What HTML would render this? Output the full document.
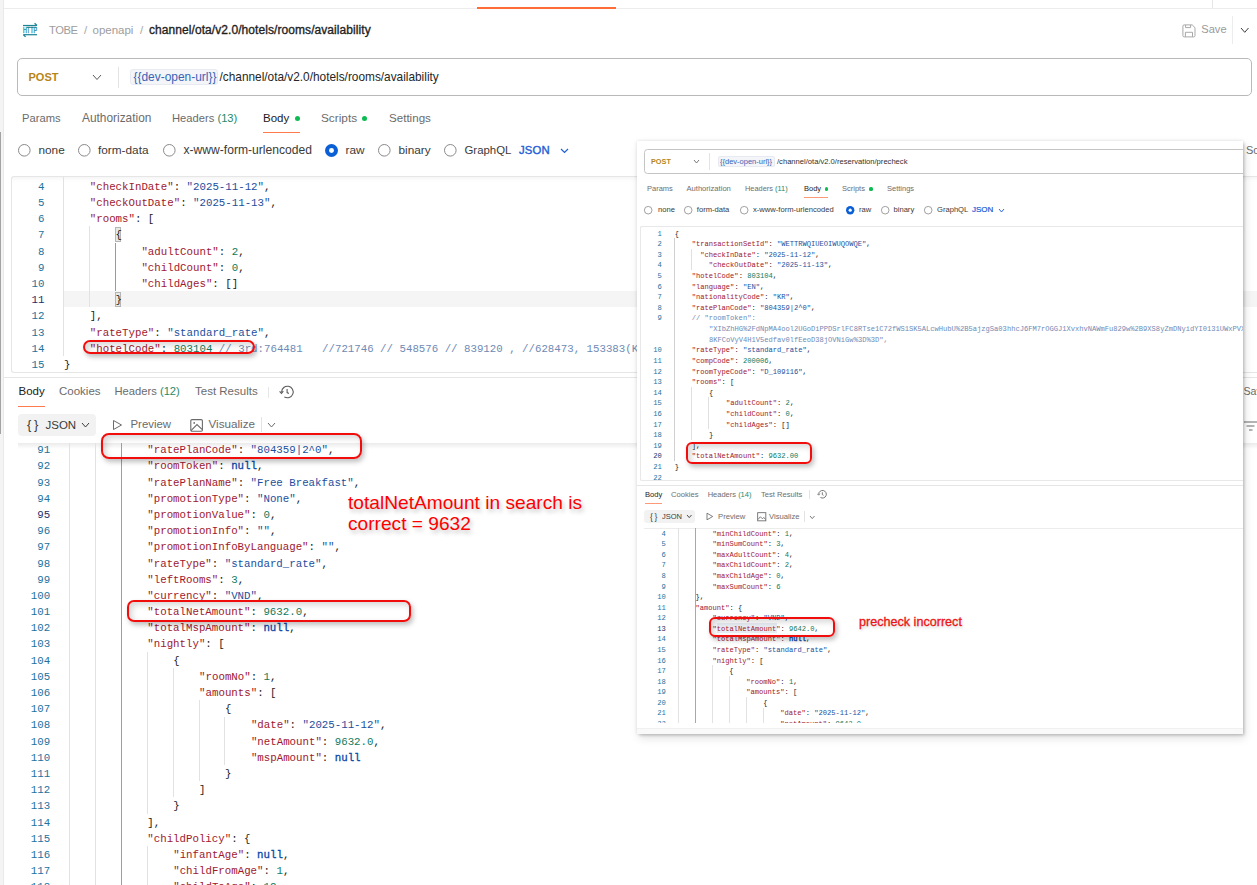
<!DOCTYPE html>
<html><head><meta charset="utf-8">
<style>
html,body{margin:0;padding:0;}
body{width:1257px;height:885px;overflow:hidden;position:relative;background:#fff;font-family:"Liberation Sans",sans-serif;}
.abs{position:absolute;}
.tx{position:absolute;white-space:nowrap;font-family:"Liberation Sans",sans-serif;}
.ln{position:absolute;text-align:right;font-family:"Liberation Mono",monospace;white-space:nowrap;}
.cl{position:absolute;white-space:pre;font-family:"Liberation Mono",monospace;color:#212121;}
</style></head><body>
<div class="abs" style="left:0;top:0;width:3px;height:885px;background:#f4f4f4"></div>
<div class="abs" style="left:3.00px;top:0.00px;width:1px;height:885.00px;background:#e9e9e9"></div>
<div class="abs" style="left:0.00px;top:132.00px;width:1px;height:302.00px;background:#a3a3a3"></div>
<div class="abs" style="left:4.00px;top:8.00px;width:1253.00px;height:1px;background:#ececec"></div>
<div class="abs" style="left:1212.00px;top:0.00px;width:1px;height:8.00px;background:#e6e6e6"></div>
<div class="abs" style="left:477px;top:7px;width:139px;height:2px;background:#ff6c37"></div>
<svg class="abs" style="left:20px;top:20px" width="20" height="20" viewBox="0 0 20 20">
<path d="M3 5.5 H17" stroke="#1b8396" stroke-width="1.2" fill="none"/>
<path d="M14.6 3.2 L17 5.5" stroke="#1b8396" stroke-width="1.2" fill="none"/>
<path d="M3.4 14.7 H17" stroke="#1b8396" stroke-width="1.2" fill="none"/>
<path d="M3.4 14.7 L5.6 16.8" stroke="#1b8396" stroke-width="1.2" fill="none"/>
<text x="3" y="13.2" font-family="Liberation Sans" font-size="8.6" font-weight="normal" fill="#1b8396" stroke="#1b8396" stroke-width="0.35" textLength="14" lengthAdjust="spacingAndGlyphs">HTTP</text>
</svg>
<div class="tx" style="left:49.00px;top:20.00px;line-height:20px;font-size:11.2px;color:#9d9d9d;font-weight:400;font-family:'Liberation Sans',sans-serif;letter-spacing:-0.4px">TOBE</div>
<div class="tx" style="left:84.00px;top:20.00px;line-height:20px;font-size:11.5px;color:#a5a5a5;font-weight:400;font-family:'Liberation Sans',sans-serif;">/</div>
<div class="tx" style="left:92.50px;top:20.00px;line-height:20px;font-size:11.5px;color:#9d9d9d;font-weight:400;font-family:'Liberation Sans',sans-serif;">openapi</div>
<div class="tx" style="left:140.00px;top:20.00px;line-height:20px;font-size:11.5px;color:#a5a5a5;font-weight:400;font-family:'Liberation Sans',sans-serif;">/</div>
<div class="tx" style="left:149.00px;top:20.00px;line-height:20px;font-size:12px;color:#1f1f1f;font-weight:400;font-family:'Liberation Sans',sans-serif;letter-spacing:0.07px;-webkit-text-stroke:0.35px #1f1f1f">channel/ota/v2.0/hotels/rooms/availability</div>
<svg class="abs" style="left:1181.5px;top:23.5px" width="14" height="14" viewBox="0 0 14 14">
<path d="M2.2 0.9 H10.2 L13 3.7 V11.6 Q13 12.9 11.7 12.9 H2.2 Q0.9 12.9 0.9 11.6 V2.2 Q0.9 0.9 2.2 0.9 Z" fill="none" stroke="#a3a3a3" stroke-width="0.95"/>
<path d="M3.6 1 V3.6 H8.6 V1" fill="none" stroke="#a3a3a3" stroke-width="0.95"/>
<path d="M3.4 12.8 V8.3 H10.5 V12.8" fill="none" stroke="#a3a3a3" stroke-width="0.95"/>
</svg>
<div class="tx" style="left:1201.30px;top:19.40px;line-height:20px;font-size:11.1px;color:#9a9a9a;font-weight:400;font-family:'Liberation Sans',sans-serif;">Save</div>
<div class="abs" style="left:1232.00px;top:16.00px;width:1px;height:28.00px;background:#ececec"></div>
<svg class="abs" style="left:1239.50px;top:27.20px" width="9.50" height="6.30"><polyline points="1,1 4.75,5.30 8.50,1" fill="none" stroke="#3c3c3c" stroke-width="1.0"/></svg>
<div class="abs" style="left:17px;top:58px;width:1235px;height:38px;box-sizing:border-box;border:1px solid #b9b9b9;border-radius:5px"></div>
<div class="tx" style="left:28.50px;top:66.50px;line-height:20px;font-size:11px;color:#b7861a;font-weight:700;font-family:'Liberation Sans',sans-serif;">POST</div>
<svg class="abs" style="left:92.00px;top:74.00px" width="10.00" height="6.50"><polyline points="1,1 5.00,5.50 9.00,1" fill="none" stroke="#5a5a5a" stroke-width="1.0"/></svg>
<div class="abs" style="left:117.50px;top:67.00px;width:1px;height:21.00px;background:#e3e3e3"></div>
<div class="abs" style="left:130px;top:69px;width:88px;height:16px;box-sizing:border-box;background:#f3f5f9;border:1px solid #e7eaf0;border-radius:3px"></div>
<div class="tx" style="left:133.50px;top:66.50px;line-height:20px;font-size:11.95px;color:#3a64b5;font-weight:400;font-family:'Liberation Sans',sans-serif;">{{dev-open-url}}</div>
<div class="tx" style="left:219.50px;top:66.50px;line-height:20px;font-size:11.85px;color:#262626;font-weight:400;font-family:'Liberation Sans',sans-serif;">/channel/ota/v2.0/hotels/rooms/availability</div>
<div class="tx" style="left:22.00px;top:108.00px;line-height:20px;font-size:11.2px;color:#6b6b6b;font-weight:400;font-family:'Liberation Sans',sans-serif;">Params</div>
<div class="tx" style="left:82.00px;top:108.00px;line-height:20px;font-size:11.9px;color:#6b6b6b;font-weight:400;font-family:'Liberation Sans',sans-serif;">Authorization</div>
<div class="tx" style="left:172.00px;top:108.00px;line-height:20px;font-size:11.2px;color:#6b6b6b;font-weight:400;font-family:'Liberation Sans',sans-serif;">Headers <span style="color:#1f8a6a">(13)</span></div>
<div class="tx" style="left:263.00px;top:108.00px;line-height:20px;font-size:11.5px;color:#212121;font-weight:400;font-family:'Liberation Sans',sans-serif;">Body</div>
<div class="abs" style="left:294.50px;top:116.00px;width:5.00px;height:5.00px;border-radius:50%;background:#0cbb52"></div>
<div class="tx" style="left:321.00px;top:108.00px;line-height:20px;font-size:11.8px;color:#6b6b6b;font-weight:400;font-family:'Liberation Sans',sans-serif;">Scripts</div>
<div class="abs" style="left:362.00px;top:116.00px;width:5.00px;height:5.00px;border-radius:50%;background:#0cbb52"></div>
<div class="tx" style="left:389.00px;top:108.00px;line-height:20px;font-size:11.6px;color:#6b6b6b;font-weight:400;font-family:'Liberation Sans',sans-serif;">Settings</div>
<div class="abs" style="left:263px;top:131.5px;width:37px;height:1.5px;background:#ff7a4d"></div>
<svg class="abs" style="left:16.90px;top:143.40px" width="14.60" height="14.60"><circle cx="7.30" cy="7.30" r="5.80" fill="#fff" stroke="#8a8a8a" stroke-width="1"/></svg>
<div class="tx" style="left:38.50px;top:140.20px;line-height:20px;font-size:11.8px;color:#3a3a3a;font-weight:400;font-family:'Liberation Sans',sans-serif;">none</div>
<svg class="abs" style="left:76.90px;top:143.40px" width="14.60" height="14.60"><circle cx="7.30" cy="7.30" r="5.80" fill="#fff" stroke="#8a8a8a" stroke-width="1"/></svg>
<div class="tx" style="left:98.00px;top:140.20px;line-height:20px;font-size:11.8px;color:#3a3a3a;font-weight:400;font-family:'Liberation Sans',sans-serif;">form-data</div>
<svg class="abs" style="left:161.90px;top:143.40px" width="14.60" height="14.60"><circle cx="7.30" cy="7.30" r="5.80" fill="#fff" stroke="#8a8a8a" stroke-width="1"/></svg>
<div class="tx" style="left:183.50px;top:140.20px;line-height:20px;font-size:12.1px;color:#3a3a3a;font-weight:400;font-family:'Liberation Sans',sans-serif;">x-www-form-urlencoded</div>
<svg class="abs" style="left:323.50px;top:143.20px" width="15.00" height="15.00"><circle cx="7.50" cy="7.50" r="6.50" fill="#0b5fd6"/><circle cx="7.50" cy="7.50" r="2.47" fill="#fff"/></svg>
<div class="tx" style="left:345.50px;top:140.20px;line-height:20px;font-size:11.8px;color:#3a3a3a;font-weight:400;font-family:'Liberation Sans',sans-serif;">raw</div>
<svg class="abs" style="left:376.90px;top:143.40px" width="14.60" height="14.60"><circle cx="7.30" cy="7.30" r="5.80" fill="#fff" stroke="#8a8a8a" stroke-width="1"/></svg>
<div class="tx" style="left:398.50px;top:140.20px;line-height:20px;font-size:11.8px;color:#3a3a3a;font-weight:400;font-family:'Liberation Sans',sans-serif;">binary</div>
<svg class="abs" style="left:442.90px;top:143.40px" width="14.60" height="14.60"><circle cx="7.30" cy="7.30" r="5.80" fill="#fff" stroke="#8a8a8a" stroke-width="1"/></svg>
<div class="tx" style="left:464.50px;top:140.20px;line-height:20px;font-size:11.4px;color:#3a3a3a;font-weight:400;font-family:'Liberation Sans',sans-serif;">GraphQL</div>
<div class="tx" style="left:519.00px;top:140.20px;line-height:20px;font-size:11.3px;color:#1f5fd6;font-weight:400;font-family:'Liberation Sans',sans-serif;-webkit-text-stroke:0.4px #1f5fd6;letter-spacing:0.2px">JSON</div>
<svg class="abs" style="left:559.50px;top:148.00px" width="9.00" height="5.50"><polyline points="1,1 4.50,4.50 8.00,1" fill="none" stroke="#1f5fd6" stroke-width="1.2"/></svg>
<div class="tx" style="left:1246.00px;top:140.00px;line-height:20px;font-size:11px;color:#6b6b6b;font-weight:400;font-family:'Liberation Sans',sans-serif;">Sc</div>
<div class="abs" style="left:11px;top:176px;width:1300px;height:197px;box-sizing:border-box;border:1px solid #e6e6e6;border-right:none;border-radius:3px 0 0 3px;box-shadow:inset 0 5px 5px -4px rgba(0,0,0,0.06)"></div>
<div class="abs" style="left:64px;top:291.20px;width:1200px;height:16.20px;background:#f5f5f5"></div>
<div class="abs" style="left:63.00px;top:177.00px;width:1px;height:179.00px;background:#e2e2e2"></div>
<div class="abs" style="left:89.00px;top:226.40px;width:1px;height:81.00px;background:#e2e2e2"></div>
<div class="abs" style="left:115.00px;top:243.10px;width:1px;height:48.10px;background:#9a9a9a"></div>
<div class="abs" style="left:115px;top:227.00px;width:6px;height:15px;background:#e4ebe4;border:1px solid #b5b5b5;box-sizing:border-box"></div>
<div class="abs" style="left:115px;top:291.80px;width:6px;height:15px;background:#e4ebe4;border:1px solid #b5b5b5;box-sizing:border-box"></div>
<div class="ln" style="left:4.50px;top:178.70px;width:40px;height:16.20px;line-height:16.20px;font-size:10.75px;color:#2172a0">4</div>
<div class="cl" style="left:89.80px;top:178.70px;height:16.20px;line-height:16.20px;font-size:10.75px"><span style="color:#a0182e">&quot;checkInDate&quot;</span>: <span style="color:#1b4f9e">&quot;2025-11-12&quot;</span>,</div>
<div class="ln" style="left:4.50px;top:194.90px;width:40px;height:16.20px;line-height:16.20px;font-size:10.75px;color:#2172a0">5</div>
<div class="cl" style="left:89.80px;top:194.90px;height:16.20px;line-height:16.20px;font-size:10.75px"><span style="color:#a0182e">&quot;checkOutDate&quot;</span>: <span style="color:#1b4f9e">&quot;2025-11-13&quot;</span>,</div>
<div class="ln" style="left:4.50px;top:211.10px;width:40px;height:16.20px;line-height:16.20px;font-size:10.75px;color:#2172a0">6</div>
<div class="cl" style="left:89.80px;top:211.10px;height:16.20px;line-height:16.20px;font-size:10.75px"><span style="color:#a0182e">&quot;rooms&quot;</span>: [</div>
<div class="ln" style="left:4.50px;top:227.30px;width:40px;height:16.20px;line-height:16.20px;font-size:10.75px;color:#2172a0">7</div>
<div class="cl" style="left:115.60px;top:227.30px;height:16.20px;line-height:16.20px;font-size:10.75px">{</div>
<div class="ln" style="left:4.50px;top:243.50px;width:40px;height:16.20px;line-height:16.20px;font-size:10.75px;color:#2172a0">8</div>
<div class="cl" style="left:141.40px;top:243.50px;height:16.20px;line-height:16.20px;font-size:10.75px"><span style="color:#a0182e">&quot;adultCount&quot;</span>: <span style="color:#127a5c">2</span>,</div>
<div class="ln" style="left:4.50px;top:259.70px;width:40px;height:16.20px;line-height:16.20px;font-size:10.75px;color:#2172a0">9</div>
<div class="cl" style="left:141.40px;top:259.70px;height:16.20px;line-height:16.20px;font-size:10.75px"><span style="color:#a0182e">&quot;childCount&quot;</span>: <span style="color:#127a5c">0</span>,</div>
<div class="ln" style="left:4.50px;top:275.90px;width:40px;height:16.20px;line-height:16.20px;font-size:10.75px;color:#2172a0">10</div>
<div class="cl" style="left:141.40px;top:275.90px;height:16.20px;line-height:16.20px;font-size:10.75px"><span style="color:#a0182e">&quot;childAges&quot;</span>: []</div>
<div class="ln" style="left:4.50px;top:292.10px;width:40px;height:16.20px;line-height:16.20px;font-size:10.75px;color:#1d2f6b">11</div>
<div class="cl" style="left:115.60px;top:292.10px;height:16.20px;line-height:16.20px;font-size:10.75px">}</div>
<div class="ln" style="left:4.50px;top:308.30px;width:40px;height:16.20px;line-height:16.20px;font-size:10.75px;color:#2172a0">12</div>
<div class="cl" style="left:89.80px;top:308.30px;height:16.20px;line-height:16.20px;font-size:10.75px">],</div>
<div class="ln" style="left:4.50px;top:324.50px;width:40px;height:16.20px;line-height:16.20px;font-size:10.75px;color:#2172a0">13</div>
<div class="cl" style="left:89.80px;top:324.50px;height:16.20px;line-height:16.20px;font-size:10.75px"><span style="color:#a0182e">&quot;rateType&quot;</span>: <span style="color:#1b4f9e">&quot;standard_rate&quot;</span>,</div>
<div class="ln" style="left:4.50px;top:340.70px;width:40px;height:16.20px;line-height:16.20px;font-size:10.75px;color:#2172a0">14</div>
<div class="cl" style="left:89.80px;top:340.70px;height:16.20px;line-height:16.20px;font-size:10.75px"><span style="color:#a0182e">&quot;hotelCode&quot;</span>: <span style="color:#127a5c">803104</span> <span style="color:#6f8ab5">// 3rd:764481   //721746 // 548576 // 839120 , //628473, 153383(K</span></div>
<div class="ln" style="left:4.50px;top:356.90px;width:40px;height:16.20px;line-height:16.20px;font-size:10.75px;color:#2172a0">15</div>
<div class="cl" style="left:64.00px;top:356.90px;height:16.20px;line-height:16.20px;font-size:10.75px">}</div>
<div class="abs" style="left:4.00px;top:377.00px;width:1253.00px;height:1px;background:#e6e6e6"></div>
<div class="tx" style="left:18.50px;top:381.00px;line-height:20px;font-size:11.5px;color:#212121;font-weight:400;font-family:'Liberation Sans',sans-serif;">Body</div>
<div class="tx" style="left:59.00px;top:381.00px;line-height:20px;font-size:11.5px;color:#6b6b6b;font-weight:400;font-family:'Liberation Sans',sans-serif;">Cookies</div>
<div class="tx" style="left:114.50px;top:381.00px;line-height:20px;font-size:11.2px;color:#6b6b6b;font-weight:400;font-family:'Liberation Sans',sans-serif;">Headers <span style="color:#1f8a6a">(12)</span></div>
<div class="tx" style="left:195.00px;top:381.00px;line-height:20px;font-size:11.5px;color:#6b6b6b;font-weight:400;font-family:'Liberation Sans',sans-serif;">Test Results</div>
<div class="abs" style="left:268.00px;top:387.00px;width:1px;height:11.00px;background:#e6e6e6"></div>
<svg class="abs" style="left:279px;top:384px" width="16" height="16" viewBox="0 0 16 16">
<path d="M2.6 7.9 A5.8 5.8 0 1 1 5.3 12.9" fill="none" stroke="#5a5a5a" stroke-width="1.1"/>
<path d="M0.6 7.3 L2.5 9.4 L4.3 7.2" fill="none" stroke="#5a5a5a" stroke-width="1.1"/>
<path d="M8.1 5 V8.6 L9.9 9.6" fill="none" stroke="#5a5a5a" stroke-width="1.1"/>
</svg>
<div class="abs" style="left:18px;top:405.5px;width:27px;height:1.5px;background:#ff7a4d"></div>
<div class="tx" style="left:1243.50px;top:381.00px;line-height:20px;font-size:10.6px;color:#6b6b6b;font-weight:400;font-family:'Liberation Sans',sans-serif;">Sav</div>
<div class="abs" style="left:18px;top:414px;width:78px;height:21.8px;background:#f2f2f2;border-radius:4px"></div>
<div class="tx" style="left:27.00px;top:414.50px;line-height:20px;font-size:13px;color:#3a3a3a;font-weight:400;font-family:'Liberation Sans',sans-serif;">{&thinsp;}</div>
<div class="tx" style="left:45.50px;top:414.50px;line-height:20px;font-size:11.5px;color:#3a3a3a;font-weight:400;font-family:'Liberation Sans',sans-serif;">JSON</div>
<svg class="abs" style="left:80.50px;top:421.50px" width="9.00" height="6.00"><polyline points="1,1 4.50,5.00 8.00,1" fill="none" stroke="#3a3a3a" stroke-width="1.0"/></svg>
<svg class="abs" style="left:112px;top:419px" width="11" height="12" viewBox="0 0 11 12">
<path d="M1.5 1.5 L9.5 6 L1.5 10.5 Z" fill="none" stroke="#6b6b6b" stroke-width="1.0"/></svg>
<div class="tx" style="left:130.50px;top:413.60px;line-height:20px;font-size:11.4px;color:#6b6b6b;font-weight:400;font-family:'Liberation Sans',sans-serif;">Preview</div>
<svg class="abs" style="left:189px;top:418px" width="15" height="15" viewBox="0 0 15 15">
<rect x="1.8" y="1.6" width="11.6" height="11.6" rx="1.2" fill="none" stroke="#6b6b6b" stroke-width="1.1"/>
<path d="M2 12.6 L8 6.6 L13 11.4" fill="none" stroke="#6b6b6b" stroke-width="1.1"/>
<circle cx="5.2" cy="4.9" r="0.9" fill="#6b6b6b"/></svg>
<div class="tx" style="left:208.50px;top:413.60px;line-height:20px;font-size:11.7px;color:#6b6b6b;font-weight:400;font-family:'Liberation Sans',sans-serif;">Visualize</div>
<div class="abs" style="left:261.00px;top:417.00px;width:1px;height:15.00px;background:#e3e3e3"></div>
<svg class="abs" style="left:267.00px;top:422.00px" width="9.00" height="6.00"><polyline points="1,1 4.50,5.00 8.00,1" fill="none" stroke="#6b6b6b" stroke-width="1.0"/></svg>
<svg class="abs" style="left:1244px;top:421px" width="13" height="11" viewBox="0 0 13 11">
<path d="M0 1 H13 M2.5 5 H10.5 M5 9 H8.5" stroke="#6b6b6b" stroke-width="1.1"/></svg>
<div class="abs" style="left:18px;top:443px;width:1300px;height:6px;background:linear-gradient(#ebebeb,rgba(255,255,255,0))"></div>
<div class="abs" style="left:69.00px;top:443.00px;width:1px;height:442.00px;background:#e2e2e2"></div>
<div class="abs" style="left:94.90px;top:443.00px;width:1px;height:442.00px;background:#e2e2e2"></div>
<div class="abs" style="left:120.80px;top:443.00px;width:1px;height:442.00px;background:#9e9e9e"></div>
<div class="abs" style="left:146.70px;top:651.77px;width:1px;height:161.90px;background:#e2e2e2"></div>
<div class="abs" style="left:172.60px;top:667.96px;width:1px;height:129.52px;background:#e2e2e2"></div>
<div class="abs" style="left:198.50px;top:700.35px;width:1px;height:80.95px;background:#e2e2e2"></div>
<div class="abs" style="left:224.40px;top:716.53px;width:1px;height:48.57px;background:#e2e2e2"></div>
<div class="abs" style="left:146.70px;top:846.06px;width:1px;height:38.94px;background:#e2e2e2"></div>
<div class="ln" style="left:10.20px;top:442.20px;width:40px;height:16.19px;line-height:16.19px;font-size:10.75px;color:#2172a0">91</div>
<div class="cl" style="left:147.30px;top:442.20px;height:16.19px;line-height:16.19px;font-size:10.75px"><span style="color:#a0182e">&quot;ratePlanCode&quot;</span>: <span style="color:#1b4f9e">&quot;804359|2^0&quot;</span>,</div>
<div class="ln" style="left:10.20px;top:458.39px;width:40px;height:16.19px;line-height:16.19px;font-size:10.75px;color:#2172a0">92</div>
<div class="cl" style="left:147.30px;top:458.39px;height:16.19px;line-height:16.19px;font-size:10.75px"><span style="color:#a0182e">&quot;roomToken&quot;</span>: <span style="color:#0b47a8;-webkit-text-stroke:0.3px #0b47a8">null</span>,</div>
<div class="ln" style="left:10.20px;top:474.58px;width:40px;height:16.19px;line-height:16.19px;font-size:10.75px;color:#2172a0">93</div>
<div class="cl" style="left:147.30px;top:474.58px;height:16.19px;line-height:16.19px;font-size:10.75px"><span style="color:#a0182e">&quot;ratePlanName&quot;</span>: <span style="color:#1b4f9e">&quot;Free Breakfast&quot;</span>,</div>
<div class="ln" style="left:10.20px;top:490.77px;width:40px;height:16.19px;line-height:16.19px;font-size:10.75px;color:#2172a0">94</div>
<div class="cl" style="left:147.30px;top:490.77px;height:16.19px;line-height:16.19px;font-size:10.75px"><span style="color:#a0182e">&quot;promotionType&quot;</span>: <span style="color:#1b4f9e">&quot;None&quot;</span>,</div>
<div class="ln" style="left:10.20px;top:506.96px;width:40px;height:16.19px;line-height:16.19px;font-size:10.75px;color:#1d2f6b">95</div>
<div class="cl" style="left:147.30px;top:506.96px;height:16.19px;line-height:16.19px;font-size:10.75px"><span style="color:#a0182e">&quot;promotionValue&quot;</span>: <span style="color:#127a5c">0</span>,</div>
<div class="ln" style="left:10.20px;top:523.15px;width:40px;height:16.19px;line-height:16.19px;font-size:10.75px;color:#2172a0">96</div>
<div class="cl" style="left:147.30px;top:523.15px;height:16.19px;line-height:16.19px;font-size:10.75px"><span style="color:#a0182e">&quot;promotionInfo&quot;</span>: <span style="color:#1b4f9e">&quot;&quot;</span>,</div>
<div class="ln" style="left:10.20px;top:539.34px;width:40px;height:16.19px;line-height:16.19px;font-size:10.75px;color:#2172a0">97</div>
<div class="cl" style="left:147.30px;top:539.34px;height:16.19px;line-height:16.19px;font-size:10.75px"><span style="color:#a0182e">&quot;promotionInfoByLanguage&quot;</span>: <span style="color:#1b4f9e">&quot;&quot;</span>,</div>
<div class="ln" style="left:10.20px;top:555.53px;width:40px;height:16.19px;line-height:16.19px;font-size:10.75px;color:#2172a0">98</div>
<div class="cl" style="left:147.30px;top:555.53px;height:16.19px;line-height:16.19px;font-size:10.75px"><span style="color:#a0182e">&quot;rateType&quot;</span>: <span style="color:#1b4f9e">&quot;standard_rate&quot;</span>,</div>
<div class="ln" style="left:10.20px;top:571.72px;width:40px;height:16.19px;line-height:16.19px;font-size:10.75px;color:#2172a0">99</div>
<div class="cl" style="left:147.30px;top:571.72px;height:16.19px;line-height:16.19px;font-size:10.75px"><span style="color:#a0182e">&quot;leftRooms&quot;</span>: <span style="color:#127a5c">3</span>,</div>
<div class="ln" style="left:10.20px;top:587.91px;width:40px;height:16.19px;line-height:16.19px;font-size:10.75px;color:#2172a0">100</div>
<div class="cl" style="left:147.30px;top:587.91px;height:16.19px;line-height:16.19px;font-size:10.75px"><span style="color:#a0182e">&quot;currency&quot;</span>: <span style="color:#1b4f9e">&quot;VND&quot;</span>,</div>
<div class="ln" style="left:10.20px;top:604.10px;width:40px;height:16.19px;line-height:16.19px;font-size:10.75px;color:#2172a0">101</div>
<div class="cl" style="left:147.30px;top:604.10px;height:16.19px;line-height:16.19px;font-size:10.75px"><span style="color:#a0182e">&quot;totalNetAmount&quot;</span>: <span style="color:#127a5c">9632.0</span>,</div>
<div class="ln" style="left:10.20px;top:620.29px;width:40px;height:16.19px;line-height:16.19px;font-size:10.75px;color:#2172a0">102</div>
<div class="cl" style="left:147.30px;top:620.29px;height:16.19px;line-height:16.19px;font-size:10.75px"><span style="color:#a0182e">&quot;totalMspAmount&quot;</span>: <span style="color:#0b47a8;-webkit-text-stroke:0.3px #0b47a8">null</span>,</div>
<div class="ln" style="left:10.20px;top:636.49px;width:40px;height:16.19px;line-height:16.19px;font-size:10.75px;color:#2172a0">103</div>
<div class="cl" style="left:147.30px;top:636.49px;height:16.19px;line-height:16.19px;font-size:10.75px"><span style="color:#a0182e">&quot;nightly&quot;</span>: [</div>
<div class="ln" style="left:10.20px;top:652.67px;width:40px;height:16.19px;line-height:16.19px;font-size:10.75px;color:#2172a0">104</div>
<div class="cl" style="left:173.20px;top:652.67px;height:16.19px;line-height:16.19px;font-size:10.75px">{</div>
<div class="ln" style="left:10.20px;top:668.86px;width:40px;height:16.19px;line-height:16.19px;font-size:10.75px;color:#2172a0">105</div>
<div class="cl" style="left:199.10px;top:668.86px;height:16.19px;line-height:16.19px;font-size:10.75px"><span style="color:#a0182e">&quot;roomNo&quot;</span>: <span style="color:#127a5c">1</span>,</div>
<div class="ln" style="left:10.20px;top:685.05px;width:40px;height:16.19px;line-height:16.19px;font-size:10.75px;color:#2172a0">106</div>
<div class="cl" style="left:199.10px;top:685.05px;height:16.19px;line-height:16.19px;font-size:10.75px"><span style="color:#a0182e">&quot;amounts&quot;</span>: [</div>
<div class="ln" style="left:10.20px;top:701.25px;width:40px;height:16.19px;line-height:16.19px;font-size:10.75px;color:#2172a0">107</div>
<div class="cl" style="left:225.00px;top:701.25px;height:16.19px;line-height:16.19px;font-size:10.75px">{</div>
<div class="ln" style="left:10.20px;top:717.43px;width:40px;height:16.19px;line-height:16.19px;font-size:10.75px;color:#2172a0">108</div>
<div class="cl" style="left:250.90px;top:717.43px;height:16.19px;line-height:16.19px;font-size:10.75px"><span style="color:#a0182e">&quot;date&quot;</span>: <span style="color:#1b4f9e">&quot;2025-11-12&quot;</span>,</div>
<div class="ln" style="left:10.20px;top:733.62px;width:40px;height:16.19px;line-height:16.19px;font-size:10.75px;color:#2172a0">109</div>
<div class="cl" style="left:250.90px;top:733.62px;height:16.19px;line-height:16.19px;font-size:10.75px"><span style="color:#a0182e">&quot;netAmount&quot;</span>: <span style="color:#127a5c">9632.0</span>,</div>
<div class="ln" style="left:10.20px;top:749.81px;width:40px;height:16.19px;line-height:16.19px;font-size:10.75px;color:#2172a0">110</div>
<div class="cl" style="left:250.90px;top:749.81px;height:16.19px;line-height:16.19px;font-size:10.75px"><span style="color:#a0182e">&quot;mspAmount&quot;</span>: <span style="color:#0b47a8;-webkit-text-stroke:0.3px #0b47a8">null</span></div>
<div class="ln" style="left:10.20px;top:766.00px;width:40px;height:16.19px;line-height:16.19px;font-size:10.75px;color:#2172a0">111</div>
<div class="cl" style="left:225.00px;top:766.00px;height:16.19px;line-height:16.19px;font-size:10.75px">}</div>
<div class="ln" style="left:10.20px;top:782.19px;width:40px;height:16.19px;line-height:16.19px;font-size:10.75px;color:#2172a0">112</div>
<div class="cl" style="left:199.10px;top:782.19px;height:16.19px;line-height:16.19px;font-size:10.75px">]</div>
<div class="ln" style="left:10.20px;top:798.38px;width:40px;height:16.19px;line-height:16.19px;font-size:10.75px;color:#2172a0">113</div>
<div class="cl" style="left:173.20px;top:798.38px;height:16.19px;line-height:16.19px;font-size:10.75px">}</div>
<div class="ln" style="left:10.20px;top:814.57px;width:40px;height:16.19px;line-height:16.19px;font-size:10.75px;color:#2172a0">114</div>
<div class="cl" style="left:147.30px;top:814.57px;height:16.19px;line-height:16.19px;font-size:10.75px">],</div>
<div class="ln" style="left:10.20px;top:830.76px;width:40px;height:16.19px;line-height:16.19px;font-size:10.75px;color:#2172a0">115</div>
<div class="cl" style="left:147.30px;top:830.76px;height:16.19px;line-height:16.19px;font-size:10.75px"><span style="color:#a0182e">&quot;childPolicy&quot;</span>: {</div>
<div class="ln" style="left:10.20px;top:846.96px;width:40px;height:16.19px;line-height:16.19px;font-size:10.75px;color:#2172a0">116</div>
<div class="cl" style="left:173.20px;top:846.96px;height:16.19px;line-height:16.19px;font-size:10.75px"><span style="color:#a0182e">&quot;infantAge&quot;</span>: <span style="color:#0b47a8;-webkit-text-stroke:0.3px #0b47a8">null</span>,</div>
<div class="ln" style="left:10.20px;top:863.14px;width:40px;height:16.19px;line-height:16.19px;font-size:10.75px;color:#2172a0">117</div>
<div class="cl" style="left:173.20px;top:863.14px;height:16.19px;line-height:16.19px;font-size:10.75px"><span style="color:#a0182e">&quot;childFromAge&quot;</span>: <span style="color:#127a5c">1</span>,</div>
<div class="ln" style="left:10.20px;top:879.33px;width:40px;height:16.19px;line-height:16.19px;font-size:10.75px;color:#2172a0">118</div>
<div class="cl" style="left:173.20px;top:879.33px;height:16.19px;line-height:16.19px;font-size:10.75px"><span style="color:#a0182e">&quot;childToAge&quot;</span>: <span style="color:#127a5c">12</span>,</div>
<div class="abs" style="left:82.80px;top:339.80px;width:172.50px;height:14.00px;box-sizing:border-box;border:2.3px solid #f20d0d;border-radius:7px;box-shadow:2px 3px 5px rgba(0,0,0,0.25), inset 3px 3px 6px rgba(0,0,0,0.16)"></div>
<div class="abs" style="left:101.00px;top:433.30px;width:260.50px;height:25.30px;box-sizing:border-box;border:2.2px solid #f20d0d;border-radius:8px;box-shadow:2px 3px 5px rgba(0,0,0,0.25), inset 3px 3px 6px rgba(0,0,0,0.16)"></div>
<div class="abs" style="left:127.00px;top:600.00px;width:284.00px;height:22.00px;box-sizing:border-box;border:2px solid #f20d0d;border-radius:7px;box-shadow:2px 3px 5px rgba(0,0,0,0.25), inset 3px 3px 6px rgba(0,0,0,0.16)"></div>
<div class="tx" style="left:348px;top:493px;font-size:19.15px;line-height:20.8px;color:#ff0000;text-shadow:2px 3px 4px rgba(0,0,0,0.25)">totalNetAmount in search is<br>correct = 9632</div>
<div class="abs" style="left:637px;top:141px;width:606px;height:593px;background:#fff;box-shadow:0 0 3px 0 rgba(0,0,0,0.12), 1.5px 1.5px 3px rgba(0,0,0,0.16), 2px 4px 9px rgba(0,0,0,0.12);overflow:hidden">
<div class="abs" style="left:6.80px;top:8.20px;width:700px;height:25px;box-sizing:border-box;border:1px solid #c4c4c4;border-radius:3.5px"></div>
<div class="tx" style="left:14.00px;top:10.50px;line-height:20px;font-size:7.3px;color:#b7861a;font-weight:700;font-family:'Liberation Sans',sans-serif;">POST</div>
<svg class="abs" style="left:55.50px;top:18.00px" width="7.00" height="5.00"><polyline points="1,1 3.50,4.00 6.00,1" fill="none" stroke="#6a6a6a" stroke-width="0.9"/></svg>
<div class="abs" style="left:72.30px;top:12.00px;width:1px;height:16.50px;background:#e3e3e3"></div>
<div class="abs" style="left:81.00px;top:15.00px;width:57px;height:11px;box-sizing:border-box;background:#f3f5f9;border:1px solid #e7eaf0;border-radius:2px"></div>
<div class="tx" style="left:83.00px;top:10.50px;line-height:20px;font-size:7.5px;color:#3a64b5;font-weight:400;font-family:'Liberation Sans',sans-serif;">{{dev-open-url}}</div>
<div class="tx" style="left:140.00px;top:10.50px;line-height:20px;font-size:7.6px;color:#303030;font-weight:400;font-family:'Liberation Sans',sans-serif;">/channel/ota/v2.0/reservation/precheck</div>
<div class="tx" style="left:10.00px;top:37.70px;line-height:20px;font-size:7.5px;color:#6e6e6e;font-weight:400;font-family:'Liberation Sans',sans-serif;">Params</div>
<div class="tx" style="left:49.50px;top:37.70px;line-height:20px;font-size:7.6px;color:#6e6e6e;font-weight:400;font-family:'Liberation Sans',sans-serif;">Authorization</div>
<div class="tx" style="left:108.00px;top:37.70px;line-height:20px;font-size:7.4px;color:#6e6e6e;font-weight:400;font-family:'Liberation Sans',sans-serif;">Headers <span style="color:#1f8a6a">(11)</span></div>
<div class="tx" style="left:167.00px;top:37.70px;line-height:20px;font-size:7.5px;color:#252525;font-weight:400;font-family:'Liberation Sans',sans-serif;">Body</div>
<div class="abs" style="left:188.00px;top:46.40px;width:3.20px;height:3.20px;border-radius:50%;background:#0cbb52"></div>
<div class="tx" style="left:205.00px;top:37.70px;line-height:20px;font-size:7.5px;color:#6e6e6e;font-weight:400;font-family:'Liberation Sans',sans-serif;">Scripts</div>
<div class="abs" style="left:232.40px;top:46.40px;width:3.20px;height:3.20px;border-radius:50%;background:#0cbb52"></div>
<div class="tx" style="left:250.00px;top:37.70px;line-height:20px;font-size:7.5px;color:#6e6e6e;font-weight:400;font-family:'Liberation Sans',sans-serif;">Settings</div>
<div class="abs" style="left:167.00px;top:56.30px;width:24px;height:1.2px;background:#ff9a78"></div>
<svg class="abs" style="left:6.30px;top:63.80px" width="10.40" height="10.40"><circle cx="5.20" cy="5.20" r="3.80" fill="#fff" stroke="#8a8a8a" stroke-width="0.8"/></svg>
<div class="tx" style="left:21.00px;top:59.00px;line-height:20px;font-size:7.6px;color:#3a3a3a;font-weight:400;font-family:'Liberation Sans',sans-serif;">none</div>
<svg class="abs" style="left:45.50px;top:63.80px" width="10.40" height="10.40"><circle cx="5.20" cy="5.20" r="3.80" fill="#fff" stroke="#8a8a8a" stroke-width="0.8"/></svg>
<div class="tx" style="left:59.80px;top:59.00px;line-height:20px;font-size:7.6px;color:#3a3a3a;font-weight:400;font-family:'Liberation Sans',sans-serif;">form-data</div>
<svg class="abs" style="left:101.60px;top:63.80px" width="10.40" height="10.40"><circle cx="5.20" cy="5.20" r="3.80" fill="#fff" stroke="#8a8a8a" stroke-width="0.8"/></svg>
<div class="tx" style="left:116.00px;top:59.00px;line-height:20px;font-size:7.6px;color:#3a3a3a;font-weight:400;font-family:'Liberation Sans',sans-serif;">x-www-form-urlencoded</div>
<svg class="abs" style="left:207.80px;top:63.80px" width="10.40" height="10.40"><circle cx="5.20" cy="5.20" r="4.20" fill="#0b5fd6"/><circle cx="5.20" cy="5.20" r="1.60" fill="#fff"/></svg>
<div class="tx" style="left:222.00px;top:59.00px;line-height:20px;font-size:7.6px;color:#3a3a3a;font-weight:400;font-family:'Liberation Sans',sans-serif;">raw</div>
<svg class="abs" style="left:243.00px;top:63.80px" width="10.40" height="10.40"><circle cx="5.20" cy="5.20" r="3.80" fill="#fff" stroke="#8a8a8a" stroke-width="0.8"/></svg>
<div class="tx" style="left:256.50px;top:59.00px;line-height:20px;font-size:7.6px;color:#3a3a3a;font-weight:400;font-family:'Liberation Sans',sans-serif;">binary</div>
<svg class="abs" style="left:286.00px;top:63.80px" width="10.40" height="10.40"><circle cx="5.20" cy="5.20" r="3.80" fill="#fff" stroke="#8a8a8a" stroke-width="0.8"/></svg>
<div class="tx" style="left:300.00px;top:59.00px;line-height:20px;font-size:7.6px;color:#3a3a3a;font-weight:400;font-family:'Liberation Sans',sans-serif;">GraphQL</div>
<div class="tx" style="left:335.00px;top:59.00px;line-height:20px;font-size:8px;color:#1559d6;font-weight:400;font-family:'Liberation Sans',sans-serif;-webkit-text-stroke:0.2px #1559d6">JSON</div>
<svg class="abs" style="left:361.00px;top:66.50px" width="7.00" height="5.00"><polyline points="1,1 3.50,4.00 6.00,1" fill="none" stroke="#1559d6" stroke-width="0.9"/></svg>
<div class="abs" style="left:3.20px;top:85.30px;width:700px;height:254.50px;box-sizing:border-box;border:1px solid #e8e8e8;border-right:none;border-radius:2px"></div>
<div class="abs" style="left:37.10px;top:97.31px;width:1px;height:222.81px;background:#cfcfcf"></div>
<div class="abs" style="left:54.20px;top:107.91px;width:1px;height:21.22px;background:#e0e0e0"></div>
<div class="abs" style="left:54.20px;top:245.84px;width:1px;height:53.05px;background:#e0e0e0"></div>
<div class="abs" style="left:71.30px;top:256.45px;width:1px;height:31.83px;background:#e0e0e0"></div>
<div class="ln" style="left:-15.30px;top:87.59px;width:40px;height:10.61px;line-height:10.61px;font-size:7.13px;color:#2172a0">1</div>
<div class="cl" style="left:37.70px;top:87.59px;height:10.61px;line-height:10.61px;font-size:7.1px">{</div>
<div class="ln" style="left:-15.30px;top:98.21px;width:40px;height:10.61px;line-height:10.61px;font-size:7.13px;color:#2172a0">2</div>
<div class="cl" style="left:54.80px;top:98.21px;height:10.61px;line-height:10.61px;font-size:7.1px"><span style="color:#a0182e">&quot;transactionSetId&quot;</span>: <span style="color:#1b4f9e">&quot;WETTRWQIUEOIWUQOWQE&quot;</span>,</div>
<div class="ln" style="left:-15.30px;top:108.81px;width:40px;height:10.61px;line-height:10.61px;font-size:7.13px;color:#2172a0">3</div>
<div class="cl" style="left:63.32px;top:108.81px;height:10.61px;line-height:10.61px;font-size:7.1px"><span style="color:#a0182e">&quot;checkInDate&quot;</span>: <span style="color:#1b4f9e">&quot;2025-11-12&quot;</span>,</div>
<div class="ln" style="left:-15.30px;top:119.43px;width:40px;height:10.61px;line-height:10.61px;font-size:7.13px;color:#2172a0">4</div>
<div class="cl" style="left:71.84px;top:119.43px;height:10.61px;line-height:10.61px;font-size:7.1px"><span style="color:#a0182e">&quot;checkOutDate&quot;</span>: <span style="color:#1b4f9e">&quot;2025-11-13&quot;</span>,</div>
<div class="ln" style="left:-15.30px;top:130.03px;width:40px;height:10.61px;line-height:10.61px;font-size:7.13px;color:#2172a0">5</div>
<div class="cl" style="left:54.80px;top:130.03px;height:10.61px;line-height:10.61px;font-size:7.1px"><span style="color:#a0182e">&quot;hotelCode&quot;</span>: <span style="color:#127a5c">803104</span>,</div>
<div class="ln" style="left:-15.30px;top:140.65px;width:40px;height:10.61px;line-height:10.61px;font-size:7.13px;color:#2172a0">6</div>
<div class="cl" style="left:54.80px;top:140.65px;height:10.61px;line-height:10.61px;font-size:7.1px"><span style="color:#a0182e">&quot;language&quot;</span>: <span style="color:#1b4f9e">&quot;EN&quot;</span>,</div>
<div class="ln" style="left:-15.30px;top:151.25px;width:40px;height:10.61px;line-height:10.61px;font-size:7.13px;color:#2172a0">7</div>
<div class="cl" style="left:54.80px;top:151.25px;height:10.61px;line-height:10.61px;font-size:7.1px"><span style="color:#a0182e">&quot;nationalityCode&quot;</span>: <span style="color:#1b4f9e">&quot;KR&quot;</span>,</div>
<div class="ln" style="left:-15.30px;top:161.86px;width:40px;height:10.61px;line-height:10.61px;font-size:7.13px;color:#2172a0">8</div>
<div class="cl" style="left:54.80px;top:161.86px;height:10.61px;line-height:10.61px;font-size:7.1px"><span style="color:#a0182e">&quot;ratePlanCode&quot;</span>: <span style="color:#1b4f9e">&quot;804359|2^0&quot;</span>,</div>
<div class="ln" style="left:-15.30px;top:172.47px;width:40px;height:10.61px;line-height:10.61px;font-size:7.13px;color:#2172a0">9</div>
<div class="cl" style="left:54.80px;top:172.47px;height:10.61px;line-height:10.61px;font-size:7.1px"><span style="color:#6f8ab5">// &quot;roomToken&quot;:</span></div>
<div class="cl" style="left:71.90px;top:183.09px;height:10.61px;line-height:10.61px;font-size:7.1px"><span style="color:#6f8ab5">&quot;XIbZhHG%2FdNpMA4ool2UGoDiPPDSrlFC8RTse1C72fWS1SK5ALcwHubU%2B5ajzgSa03hhcJ6FM7rOGGJ1XvxhvNAWmFu829w%2B9XS8yZmDNyidYI0131UWxPVX</span></div>
<div class="cl" style="left:71.90px;top:193.69px;height:10.61px;line-height:10.61px;font-size:7.1px"><span style="color:#6f8ab5">8KFCoVyV4H1V5edfav0lfEeoD38jOVNiGw%3D%3D&quot;,</span></div>
<div class="ln" style="left:-15.30px;top:204.30px;width:40px;height:10.61px;line-height:10.61px;font-size:7.13px;color:#2172a0">10</div>
<div class="cl" style="left:54.80px;top:204.30px;height:10.61px;line-height:10.61px;font-size:7.1px"><span style="color:#a0182e">&quot;rateType&quot;</span>: <span style="color:#1b4f9e">&quot;standard_rate&quot;</span>,</div>
<div class="ln" style="left:-15.30px;top:214.91px;width:40px;height:10.61px;line-height:10.61px;font-size:7.13px;color:#2172a0">11</div>
<div class="cl" style="left:54.80px;top:214.91px;height:10.61px;line-height:10.61px;font-size:7.1px"><span style="color:#a0182e">&quot;compCode&quot;</span>: <span style="color:#127a5c">200006</span>,</div>
<div class="ln" style="left:-15.30px;top:225.53px;width:40px;height:10.61px;line-height:10.61px;font-size:7.13px;color:#2172a0">12</div>
<div class="cl" style="left:54.80px;top:225.53px;height:10.61px;line-height:10.61px;font-size:7.1px"><span style="color:#a0182e">&quot;roomTypeCode&quot;</span>: <span style="color:#1b4f9e">&quot;D_109116&quot;</span>,</div>
<div class="ln" style="left:-15.30px;top:236.13px;width:40px;height:10.61px;line-height:10.61px;font-size:7.13px;color:#2172a0">13</div>
<div class="cl" style="left:54.80px;top:236.13px;height:10.61px;line-height:10.61px;font-size:7.1px"><span style="color:#a0182e">&quot;rooms&quot;</span>: [</div>
<div class="ln" style="left:-15.30px;top:246.74px;width:40px;height:10.61px;line-height:10.61px;font-size:7.13px;color:#2172a0">14</div>
<div class="cl" style="left:71.90px;top:246.74px;height:10.61px;line-height:10.61px;font-size:7.1px">{</div>
<div class="ln" style="left:-15.30px;top:257.35px;width:40px;height:10.61px;line-height:10.61px;font-size:7.13px;color:#2172a0">15</div>
<div class="cl" style="left:89.00px;top:257.35px;height:10.61px;line-height:10.61px;font-size:7.1px"><span style="color:#a0182e">&quot;adultCount&quot;</span>: <span style="color:#127a5c">2</span>,</div>
<div class="ln" style="left:-15.30px;top:267.96px;width:40px;height:10.61px;line-height:10.61px;font-size:7.13px;color:#2172a0">16</div>
<div class="cl" style="left:89.00px;top:267.96px;height:10.61px;line-height:10.61px;font-size:7.1px"><span style="color:#a0182e">&quot;childCount&quot;</span>: <span style="color:#127a5c">0</span>,</div>
<div class="ln" style="left:-15.30px;top:278.57px;width:40px;height:10.61px;line-height:10.61px;font-size:7.13px;color:#2172a0">17</div>
<div class="cl" style="left:89.00px;top:278.57px;height:10.61px;line-height:10.61px;font-size:7.1px"><span style="color:#a0182e">&quot;childAges&quot;</span>: []</div>
<div class="ln" style="left:-15.30px;top:289.18px;width:40px;height:10.61px;line-height:10.61px;font-size:7.13px;color:#2172a0">18</div>
<div class="cl" style="left:71.90px;top:289.18px;height:10.61px;line-height:10.61px;font-size:7.1px">}</div>
<div class="ln" style="left:-15.30px;top:299.79px;width:40px;height:10.61px;line-height:10.61px;font-size:7.13px;color:#2172a0">19</div>
<div class="cl" style="left:54.80px;top:299.79px;height:10.61px;line-height:10.61px;font-size:7.1px">],</div>
<div class="ln" style="left:-15.30px;top:310.40px;width:40px;height:10.61px;line-height:10.61px;font-size:7.13px;color:#1d2f6b">20</div>
<div class="cl" style="left:54.80px;top:310.40px;height:10.61px;line-height:10.61px;font-size:7.1px"><span style="color:#a0182e">&quot;totalNetAmount&quot;</span>: <span style="color:#127a5c">9632.00</span></div>
<div class="ln" style="left:-15.30px;top:321.01px;width:40px;height:10.61px;line-height:10.61px;font-size:7.13px;color:#2172a0">21</div>
<div class="cl" style="left:37.70px;top:321.01px;height:10.61px;line-height:10.61px;font-size:7.1px">}</div>
<div class="ln" style="left:-15.30px;top:331.62px;width:40px;height:10.61px;line-height:10.61px;font-size:7.13px;color:#2172a0">22</div>
<div class="cl" style="left:37.70px;top:331.62px;height:10.61px;line-height:10.61px;font-size:7.1px"></div>
<div class="abs" style="left:0.00px;top:344.00px;width:606.00px;height:1px;background:#e6e6e6"></div>
<div class="tx" style="left:8.00px;top:343.80px;line-height:20px;font-size:7.6px;color:#252525;font-weight:400;font-family:'Liberation Sans',sans-serif;">Body</div>
<div class="tx" style="left:34.00px;top:343.80px;line-height:20px;font-size:7.6px;color:#6e6e6e;font-weight:400;font-family:'Liberation Sans',sans-serif;">Cookies</div>
<div class="tx" style="left:70.70px;top:343.80px;line-height:20px;font-size:7.5px;color:#6e6e6e;font-weight:400;font-family:'Liberation Sans',sans-serif;">Headers <span style="color:#1f8a6a">(14)</span></div>
<div class="tx" style="left:124.00px;top:343.80px;line-height:20px;font-size:7.6px;color:#6e6e6e;font-weight:400;font-family:'Liberation Sans',sans-serif;">Test Results</div>
<div class="abs" style="left:172.00px;top:349.00px;width:1px;height:9.00px;background:#e3e3e3"></div>
<svg class="abs" style="left:179.50px;top:348.20px" width="10.5" height="10.5" viewBox="0 0 16 16">
<path d="M2.6 7.9 A5.8 5.8 0 1 1 5.3 12.9" fill="none" stroke="#6b6b6b" stroke-width="1.4"/>
<path d="M0.6 7.3 L2.5 9.4 L4.3 7.2" fill="none" stroke="#6b6b6b" stroke-width="1.4"/>
<path d="M8.1 5 V8.6 L9.9 9.6" fill="none" stroke="#6b6b6b" stroke-width="1.4"/></svg>
<div class="abs" style="left:8.00px;top:362.30px;width:17px;height:1.2px;background:#ff9a78"></div>
<div class="abs" style="left:7.30px;top:369.00px;width:51px;height:12.8px;background:#f2f2f2;border-radius:3px"></div>
<div class="tx" style="left:13.00px;top:365.50px;line-height:20px;font-size:8.5px;color:#3a3a3a;font-weight:400;font-family:'Liberation Sans',sans-serif;">{&thinsp;}</div>
<div class="tx" style="left:25.00px;top:365.50px;line-height:20px;font-size:7.5px;color:#3a3a3a;font-weight:400;font-family:'Liberation Sans',sans-serif;">JSON</div>
<svg class="abs" style="left:48.50px;top:373.20px" width="6.50" height="4.60"><polyline points="1,1 3.25,3.60 5.50,1" fill="none" stroke="#3a3a3a" stroke-width="0.9"/></svg>
<svg class="abs" style="left:69.00px;top:371.30px" width="8" height="9" viewBox="0 0 12 13">
<path d="M1.5 1.5 L10 6.5 L1.5 11.5 Z" fill="none" stroke="#6b6b6b" stroke-width="1.3"/></svg>
<div class="tx" style="left:81.00px;top:365.50px;line-height:20px;font-size:7.7px;color:#6e6e6e;font-weight:400;font-family:'Liberation Sans',sans-serif;">Preview</div>
<svg class="abs" style="left:120.00px;top:371.00px" width="9.5" height="9.5" viewBox="0 0 14 14">
<rect x="1" y="1" width="12" height="12" fill="none" stroke="#6b6b6b" stroke-width="1.3"/>
<path d="M1.5 11 L5 7 L8 10 L10 8 L12.5 11" fill="none" stroke="#6b6b6b" stroke-width="1.3"/></svg>
<div class="tx" style="left:132.00px;top:365.50px;line-height:20px;font-size:7.7px;color:#6e6e6e;font-weight:400;font-family:'Liberation Sans',sans-serif;">Visualize</div>
<div class="abs" style="left:166.50px;top:370.00px;width:1px;height:10.50px;background:#e3e3e3"></div>
<svg class="abs" style="left:172.00px;top:373.50px" width="6.50" height="4.60"><polyline points="1,1 3.25,3.60 5.50,1" fill="none" stroke="#6b6b6b" stroke-width="0.9"/></svg>
<div class="abs" style="left:7.00px;top:386.60px;width:599.00px;height:1px;background:#ececec"></div>
<div class="abs" style="left:0;top:387.00px;width:606px;height:195.30px;overflow:hidden">
<div class="abs" style="left:41.00px;top:0.00px;width:1px;height:200.00px;background:#e2e2e2"></div>
<div class="abs" style="left:58.45px;top:0.00px;width:1px;height:200.00px;background:#a8a8a8"></div>
<div class="abs" style="left:75.40px;top:137.25px;width:1px;height:62.75px;background:#e2e2e2"></div>
<div class="abs" style="left:92.35px;top:147.83px;width:1px;height:52.17px;background:#e2e2e2"></div>
<div class="abs" style="left:109.30px;top:168.99px;width:1px;height:31.01px;background:#e2e2e2"></div>
<div class="abs" style="left:126.25px;top:179.57px;width:1px;height:20.43px;background:#e2e2e2"></div>
<div class="abs" style="left:80.00px;top:95.22px;width:59.64px;height:10px;background:#e8edf3"></div>
<div class="ln" style="left:-11.30px;top:0.61px;width:40px;height:10.58px;line-height:10.58px;font-size:7.13px;color:#2172a0">4</div>
<div class="cl" style="left:75.40px;top:0.61px;height:10.58px;line-height:10.58px;font-size:7.1px"><span style="color:#a0182e">&quot;minChildCount&quot;</span>: <span style="color:#127a5c">1</span>,</div>
<div class="ln" style="left:-11.30px;top:11.19px;width:40px;height:10.58px;line-height:10.58px;font-size:7.13px;color:#2172a0">5</div>
<div class="cl" style="left:75.40px;top:11.19px;height:10.58px;line-height:10.58px;font-size:7.1px"><span style="color:#a0182e">&quot;minSumCount&quot;</span>: <span style="color:#127a5c">3</span>,</div>
<div class="ln" style="left:-11.30px;top:21.77px;width:40px;height:10.58px;line-height:10.58px;font-size:7.13px;color:#2172a0">6</div>
<div class="cl" style="left:75.40px;top:21.77px;height:10.58px;line-height:10.58px;font-size:7.1px"><span style="color:#a0182e">&quot;maxAdultCount&quot;</span>: <span style="color:#127a5c">4</span>,</div>
<div class="ln" style="left:-11.30px;top:32.35px;width:40px;height:10.58px;line-height:10.58px;font-size:7.13px;color:#2172a0">7</div>
<div class="cl" style="left:75.40px;top:32.35px;height:10.58px;line-height:10.58px;font-size:7.1px"><span style="color:#a0182e">&quot;maxChildCount&quot;</span>: <span style="color:#127a5c">2</span>,</div>
<div class="ln" style="left:-11.30px;top:42.93px;width:40px;height:10.58px;line-height:10.58px;font-size:7.13px;color:#2172a0">8</div>
<div class="cl" style="left:75.40px;top:42.93px;height:10.58px;line-height:10.58px;font-size:7.1px"><span style="color:#a0182e">&quot;maxChildAge&quot;</span>: <span style="color:#127a5c">0</span>,</div>
<div class="ln" style="left:-11.30px;top:53.51px;width:40px;height:10.58px;line-height:10.58px;font-size:7.13px;color:#2172a0">9</div>
<div class="cl" style="left:75.40px;top:53.51px;height:10.58px;line-height:10.58px;font-size:7.1px"><span style="color:#a0182e">&quot;maxSumCount&quot;</span>: <span style="color:#127a5c">6</span></div>
<div class="ln" style="left:-11.30px;top:64.09px;width:40px;height:10.58px;line-height:10.58px;font-size:7.13px;color:#2172a0">10</div>
<div class="cl" style="left:58.45px;top:64.09px;height:10.58px;line-height:10.58px;font-size:7.1px">},</div>
<div class="ln" style="left:-11.30px;top:74.67px;width:40px;height:10.58px;line-height:10.58px;font-size:7.13px;color:#2172a0">11</div>
<div class="cl" style="left:58.45px;top:74.67px;height:10.58px;line-height:10.58px;font-size:7.1px"><span style="color:#a0182e">&quot;amount&quot;</span>: {</div>
<div class="ln" style="left:-11.30px;top:85.25px;width:40px;height:10.58px;line-height:10.58px;font-size:7.13px;color:#2172a0">12</div>
<div class="cl" style="left:75.40px;top:85.25px;height:10.58px;line-height:10.58px;font-size:7.1px"><span style="color:#a0182e">&quot;currency&quot;</span>: <span style="color:#1b4f9e">&quot;VND&quot;</span>,</div>
<div class="ln" style="left:-11.30px;top:95.83px;width:40px;height:10.58px;line-height:10.58px;font-size:7.13px;color:#1d2f6b">13</div>
<div class="cl" style="left:75.40px;top:95.83px;height:10.58px;line-height:10.58px;font-size:7.1px"><span style="color:#a0182e">&quot;totalNetAmount&quot;</span>: <span style="color:#127a5c">9642.0</span>,</div>
<div class="ln" style="left:-11.30px;top:106.41px;width:40px;height:10.58px;line-height:10.58px;font-size:7.13px;color:#2172a0">14</div>
<div class="cl" style="left:75.40px;top:106.41px;height:10.58px;line-height:10.58px;font-size:7.1px"><span style="color:#a0182e">&quot;totalMspAmount&quot;</span>: <span style="color:#0b47a8;-webkit-text-stroke:0.3px #0b47a8">null</span>,</div>
<div class="ln" style="left:-11.30px;top:116.99px;width:40px;height:10.58px;line-height:10.58px;font-size:7.13px;color:#2172a0">15</div>
<div class="cl" style="left:75.40px;top:116.99px;height:10.58px;line-height:10.58px;font-size:7.1px"><span style="color:#a0182e">&quot;rateType&quot;</span>: <span style="color:#1b4f9e">&quot;standard_rate&quot;</span>,</div>
<div class="ln" style="left:-11.30px;top:127.57px;width:40px;height:10.58px;line-height:10.58px;font-size:7.13px;color:#2172a0">16</div>
<div class="cl" style="left:75.40px;top:127.57px;height:10.58px;line-height:10.58px;font-size:7.1px"><span style="color:#a0182e">&quot;nightly&quot;</span>: [</div>
<div class="ln" style="left:-11.30px;top:138.15px;width:40px;height:10.58px;line-height:10.58px;font-size:7.13px;color:#2172a0">17</div>
<div class="cl" style="left:92.35px;top:138.15px;height:10.58px;line-height:10.58px;font-size:7.1px">{</div>
<div class="ln" style="left:-11.30px;top:148.73px;width:40px;height:10.58px;line-height:10.58px;font-size:7.13px;color:#2172a0">18</div>
<div class="cl" style="left:109.30px;top:148.73px;height:10.58px;line-height:10.58px;font-size:7.1px"><span style="color:#a0182e">&quot;roomNo&quot;</span>: <span style="color:#127a5c">1</span>,</div>
<div class="ln" style="left:-11.30px;top:159.31px;width:40px;height:10.58px;line-height:10.58px;font-size:7.13px;color:#2172a0">19</div>
<div class="cl" style="left:109.30px;top:159.31px;height:10.58px;line-height:10.58px;font-size:7.1px"><span style="color:#a0182e">&quot;amounts&quot;</span>: [</div>
<div class="ln" style="left:-11.30px;top:169.89px;width:40px;height:10.58px;line-height:10.58px;font-size:7.13px;color:#2172a0">20</div>
<div class="cl" style="left:126.25px;top:169.89px;height:10.58px;line-height:10.58px;font-size:7.1px">{</div>
<div class="ln" style="left:-11.30px;top:180.47px;width:40px;height:10.58px;line-height:10.58px;font-size:7.13px;color:#2172a0">21</div>
<div class="cl" style="left:143.20px;top:180.47px;height:10.58px;line-height:10.58px;font-size:7.1px"><span style="color:#a0182e">&quot;date&quot;</span>: <span style="color:#1b4f9e">&quot;2025-11-12&quot;</span>,</div>
<div class="ln" style="left:-11.30px;top:191.05px;width:40px;height:10.58px;line-height:10.58px;font-size:7.13px;color:#2172a0">22</div>
<div class="cl" style="left:143.20px;top:191.05px;height:10.58px;line-height:10.58px;font-size:7.1px"><span style="color:#a0182e">&quot;netAmount&quot;</span>: <span style="color:#127a5c">9642.0</span>,</div>
</div>
<div class="abs" style="left:0;top:587.30px;width:606px;height:10px;background:#f9f9f9;border-top:1px solid #f0f0f0"></div>
</div>
<div class="abs" style="left:686.20px;top:441.50px;width:126.10px;height:22.80px;box-sizing:border-box;border:2px solid #f20d0d;border-radius:6px;box-shadow:2px 3px 5px rgba(0,0,0,0.25), inset 3px 3px 6px rgba(0,0,0,0.16)"></div>
<div class="abs" style="left:709.20px;top:616.50px;width:126.10px;height:20.00px;box-sizing:border-box;border:2px solid #f20d0d;border-radius:6px;box-shadow:2px 3px 5px rgba(0,0,0,0.25), inset 3px 3px 6px rgba(0,0,0,0.16)"></div>
<div class="tx" style="left:859px;top:611.5px;font-size:12.6px;line-height:20px;font-weight:400;color:#ee1414;-webkit-text-stroke:0.3px #ee1414;text-shadow:1px 2px 3px rgba(0,0,0,0.2)">precheck incorrect</div>
</body></html>
